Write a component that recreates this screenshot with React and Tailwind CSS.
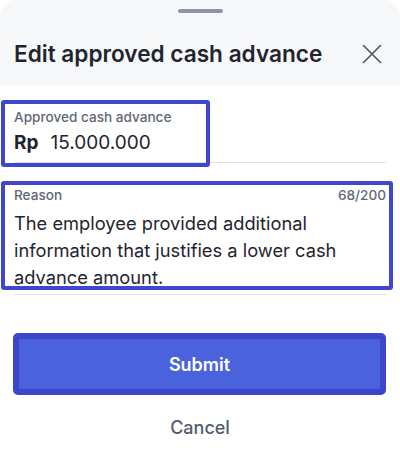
import { useState } from 'react'

const REASON = 'The employee provided additional information that justifies a lower cash advance amount.'

function CloseIcon() {
  return (
    <svg width="20" height="20" viewBox="0 0 20 20" fill="none" stroke="#4A5263" strokeWidth="1.6" strokeLinecap="round">
      <path d="M1.5 1.5 L18.5 18.5 M18.5 1.5 L1.5 18.5" />
    </svg>
  )
}

export default function App() {
  const [amount] = useState('15.000.000')
  const [reason] = useState(REASON)

  return (
    <div className="h-[468px] w-[400px] overflow-hidden bg-white" style={{ fontFamily: 'Inter, "Noto Sans", sans-serif' }}>
      {/* Header */}
      <div className="rounded-t-2xl bg-[#F7F8FA] pt-[9px] pb-[17px]">
        <div className="mx-auto h-[4px] w-[45px] rounded-full bg-[#8C96A8]" />
        <div className="mt-[26px] flex items-center justify-between pl-[14px] pr-[18px]">
          <h2 className="text-[22.6px] leading-[30px] font-semibold text-[#1F2430]">Edit approved cash advance</h2>
          <button className="flex h-[20px] w-[20px] items-center justify-center">
            <CloseIcon />
          </button>
        </div>
      </div>

      {/* Approved amount */}
      <div className="relative mx-[14px] mt-[22px] border-b border-[#DEE1E6] pb-[6px]">
        <div className="text-[13.6px] leading-[18px] font-medium text-[#5F6877]">Approved cash advance</div>
        <div className="mt-[4px] flex items-center text-[19px] leading-[26px] text-[#1F2430]">
          <span className="font-bold">Rp</span>
          <span className="ml-[12px]">{amount}</span>
        </div>
        <div className="pointer-events-none absolute top-[-8px] left-[-13px] h-[67px] w-[209px] rounded-[3px] border-[4px] border-[#3F48CC]" />
      </div>

      {/* Reason */}
      <div className="relative mx-[14px] mt-[23px] border-b border-[#DEE1E6] pb-[3px]">
        <div className="flex justify-between text-[13.6px] leading-[18px] font-medium text-[#5F6877]">
          <span>Reason</span>
          <span>68/200</span>
        </div>
        <p className="mt-[6px] text-[18.3px] leading-[27px] text-[#1F2430]">{reason}</p>
        <div className="pointer-events-none absolute top-[-5px] left-[-13px] right-[-7px] bottom-[4px] rounded-[3px] border-[4px] border-[#3F48CC]" />
      </div>

      {/* Actions */}
      <button className="mx-[13px] mt-[38px] flex h-[62px] w-[373px] items-center justify-center rounded-[5px] border-[6px] border-[#3D46CA] bg-[#4B62DD] text-[18px] font-semibold text-white">
        Submit
      </button>
      <button className="mx-auto mt-[20px] block text-[18px] leading-[26px] font-medium text-[#525C6B]">
        Cancel
      </button>
    </div>
  )
}
